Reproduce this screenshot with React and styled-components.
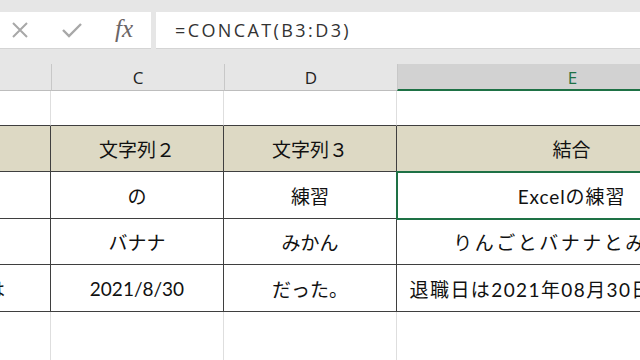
import React from "react";
import styled, { createGlobalStyle, css } from "styled-components";

const GlobalStyle = createGlobalStyle`
  html, body {
    margin: 0;
    padding: 0;
    background: #ffffff;
    overflow: hidden;
  }
`;

const GREEN = "#1e7145";
const DARK = "#3f3f3f";
const LIGHT = "#dedede";
const COLS = "51px 173px 173px 350px";

const Screen = styled.div`
  width: 640px;
  height: 360px;
  overflow: hidden;
  background: #ffffff;
  font-family: "Lato", "Noto Sans CJK JP", sans-serif;
`;

const FormulaBar = styled.div`
  display: flex;
  gap: 5px;
  height: 37px;
  padding: 12px 0 0 0;
  background: #e6e6e6;
`;

const ActionBox = styled.div`
  width: 151px;
  flex-shrink: 0;
  background: #ffffff;
  display: flex;
  align-items: center;
  border-bottom: 1px solid #d4d4d4;
  box-sizing: border-box;
`;

const ActionIcon = styled.span`
  width: ${(p) => p.$w}px;
  display: flex;
  justify-content: center;
  align-items: center;
`;

const Fx = styled.span`
  font-family: "Liberation Serif", "DejaVu Serif", serif;
  font-style: italic;
  font-size: 25px;
  color: #6b6566;
  margin-top: -3px;
`;

const FormulaInput = styled.div`
  flex: 1;
  background: #ffffff;
  display: flex;
  align-items: center;
  padding-left: 19px;
  font-family: "Open Sans", "Noto Sans", sans-serif;
  font-size: 18px;
  letter-spacing: 2.4px;
  color: #333333;
  border-bottom: 1px solid #d4d4d4;
  box-sizing: border-box;
`;

const HeaderStrip = styled.div`
  background: #e6e6e6;
  padding-top: 15px;
`;

const Grid = styled.div`
  display: grid;
  grid-template-columns: ${COLS};
  width: 747px;
`;

const ColHead = styled.div`
  height: 27px;
  box-sizing: border-box;
  display: flex;
  align-items: center;
  justify-content: center;
  font-family: "Open Sans", "Noto Sans", sans-serif;
  font-size: 17px;
  color: #222222;
  border-left: 1px solid #c8c8c8;
  border-bottom: 1px solid #bdbdbd;
  ${(p) =>
    p.$first &&
    css`
      border-left: none;
    `}
  ${(p) =>
    p.$active &&
    css`
      background: #d2d2d2;
      color: ${GREEN};
      border-bottom: 2px solid ${GREEN};
      padding-top: 1px;
    `}
`;

const Cell = styled.div`
  position: relative;
  height: ${(p) => p.$h}px;
  box-sizing: border-box;
  display: flex;
  align-items: center;
  justify-content: ${(p) => p.$justify || "center"};
  overflow: hidden;
  white-space: nowrap;
  font-size: 19px;
  letter-spacing: ${(p) => p.$spacing || 0}px;
  color: #111111;
  border-right: 1px solid ${(p) => (p.$framed ? DARK : LIGHT)};
  border-bottom: 1px solid ${(p) => (p.$framed || p.$topOfTable ? DARK : LIGHT)};
  ${(p) =>
    p.$head &&
    css`
      background: #ddd9c4;
    `}
  ${(p) =>
    p.$selected &&
    css`
      overflow: visible;
      z-index: 1;
      outline: 2px solid ${GREEN};
      outline-offset: -1px;
    `}
`;

const Clip = styled.span`
  padding-right: ${(p) => p.$pr || 0}px;
`;

function CrossIcon() {
  return (
    <svg width="18" height="18" viewBox="0 0 18 18">
      <path d="M2 2 L16 16 M16 2 L2 16" stroke="#a8a8a8" strokeWidth="2" fill="none" />
    </svg>
  );
}

function CheckIcon() {
  return (
    <svg width="22" height="18" viewBox="0 0 22 18">
      <path d="M2 9 L8 15 L20 3" stroke="#a8a8a8" strokeWidth="2.4" fill="none" />
    </svg>
  );
}

const rows = [
  { h: 46, cells: ["", "文字列２", "文字列３", "結合"], head: true, spacing: 0 },
  { h: 47, cells: ["", "の", "練習", "Excelの練習"], selected: 3, spacing: 0.9 },
  { h: 46, cells: ["", "バナナ", "みかん", "りんごとバナナとみかん"], spacing: 2.5 },
  {
    h: 47,
    cells: ["退職日は", "2021/8/30", "だった。", "退職日は2021年08月30日だった。"],
    spacing: 1.4,
  },
];

export default function App() {
  return (
    <Screen>
      <GlobalStyle />
      <FormulaBar>
        <ActionBox>
          <ActionIcon $w={40}>
            <CrossIcon />
          </ActionIcon>
          <ActionIcon $w={64}>
            <CheckIcon />
          </ActionIcon>
          <ActionIcon $w={40}>
            <Fx>fx</Fx>
          </ActionIcon>
        </ActionBox>
        <FormulaInput>=CONCAT(B3:D3)</FormulaInput>
      </FormulaBar>
      <HeaderStrip>
        <Grid>
          <ColHead $first />
          <ColHead>C</ColHead>
          <ColHead>D</ColHead>
          <ColHead $active>E</ColHead>
        </Grid>
      </HeaderStrip>
      <Grid>
        {["", "", "", ""].map((_, i) => (
          <Cell key={i} $h={35} $topOfTable />
        ))}
        {rows.map((row, r) =>
          row.cells.map((text, c) => (
            <Cell
              key={`${r}-${c}`}
              $h={row.h}
              $framed
              $head={row.head}
              $selected={row.selected === c}
              $spacing={c === 3 ? row.spacing : 0}
              $justify={c === 0 ? "flex-end" : "center"}
            >
              {c === 0 ? <Clip $pr={45}>{text}</Clip> : text}
            </Cell>
          ))
        )}
        {["", "", "", ""].map((_, i) => (
          <Cell key={`e${i}`} $h={60} />
        ))}
      </Grid>
    </Screen>
  );
}
